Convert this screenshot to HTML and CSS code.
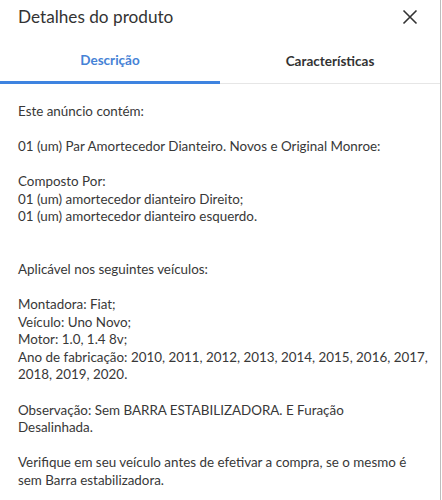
FILE: index.html
```html
<!DOCTYPE html>
<html lang="pt-BR">
<head>
<meta charset="utf-8">
<link rel="stylesheet" href="styles.css">
</head>
<body>
<div class="sheet">
  <header class="top">
    <h1 class="title">Detalhes do produto</h1>
    <button class="close" aria-label="Fechar">
      <svg width="16" height="16" viewBox="0 0 16 16"><path d="M1.5 1.5 L14.5 14.5 M14.5 1.5 L1.5 14.5" stroke="#333" stroke-width="1.6" fill="none"/></svg>
    </button>
  </header>
  <nav class="tabs">
    <div class="tab active">Descrição</div>
    <div class="tab">Características</div>
  </nav>
  <div class="desc">Este anúncio contém:

01 (um) Par Amortecedor Dianteiro. Novos e Original Monroe:

Composto Por:
01 (um) amortecedor dianteiro Direito;
01 (um) amortecedor dianteiro esquerdo.


Aplicável nos seguintes veículos:

Montadora: Fiat;
Veículo: Uno Novo;
Motor: 1.0, 1.4 8v;
Ano de fabricação: 2010, 2011, 2012, 2013, 2014, 2015, 2016, 2017,
2018, 2019, 2020.

Observação: Sem BARRA ESTABILIZADORA. E Furação
Desalinhada.

Verifique em seu veículo antes de efetivar a compra, se o mesmo é
sem Barra estabilizadora.</div>
</div>
</body>
</html>
```
FILE: styles.css
```css
html, body {
  margin: 0;
  padding: 0;
  background: #fff;
}
body {
  font-family: "Lato", "Liberation Sans", sans-serif;
  color: #333;
}
.sheet {
  width: 440px;
  height: 500px;
  border-right: 1px solid #bdbdbd;
  overflow: hidden;
}
.top {
  display: flex;
  align-items: center;
  justify-content: space-between;
  height: 32px;
  padding: 0 22px 0 18px;
}
.title {
  margin: 0;
  font-size: 17.2px;
  font-weight: 400;
  color: #333;
}
.close {
  border: 0;
  background: none;
  padding: 0;
  margin-top: 2px;
  display: flex;
}
.tabs {
  display: flex;
  height: 52px;
  border-bottom: 1px solid #e6e6e6;
  box-sizing: border-box;
}
.tab {
  flex: 1;
  display: flex;
  align-items: center;
  justify-content: center;
  font-size: 13.5px;
  font-weight: 700;
  color: #333;
  padding-top: 7px;
  box-sizing: border-box;
}
.tab.active {
  color: #4682d6;
  border-bottom: 3px solid #3e83e0;
  margin-bottom: -1px;
  border-top-right-radius: 2px;
}
.desc {
  white-space: pre-line;
  padding: 19px 8px 0 18px;
  font-size: 13.4px;
  line-height: 17.57px;
  color: #383838;
}
```
